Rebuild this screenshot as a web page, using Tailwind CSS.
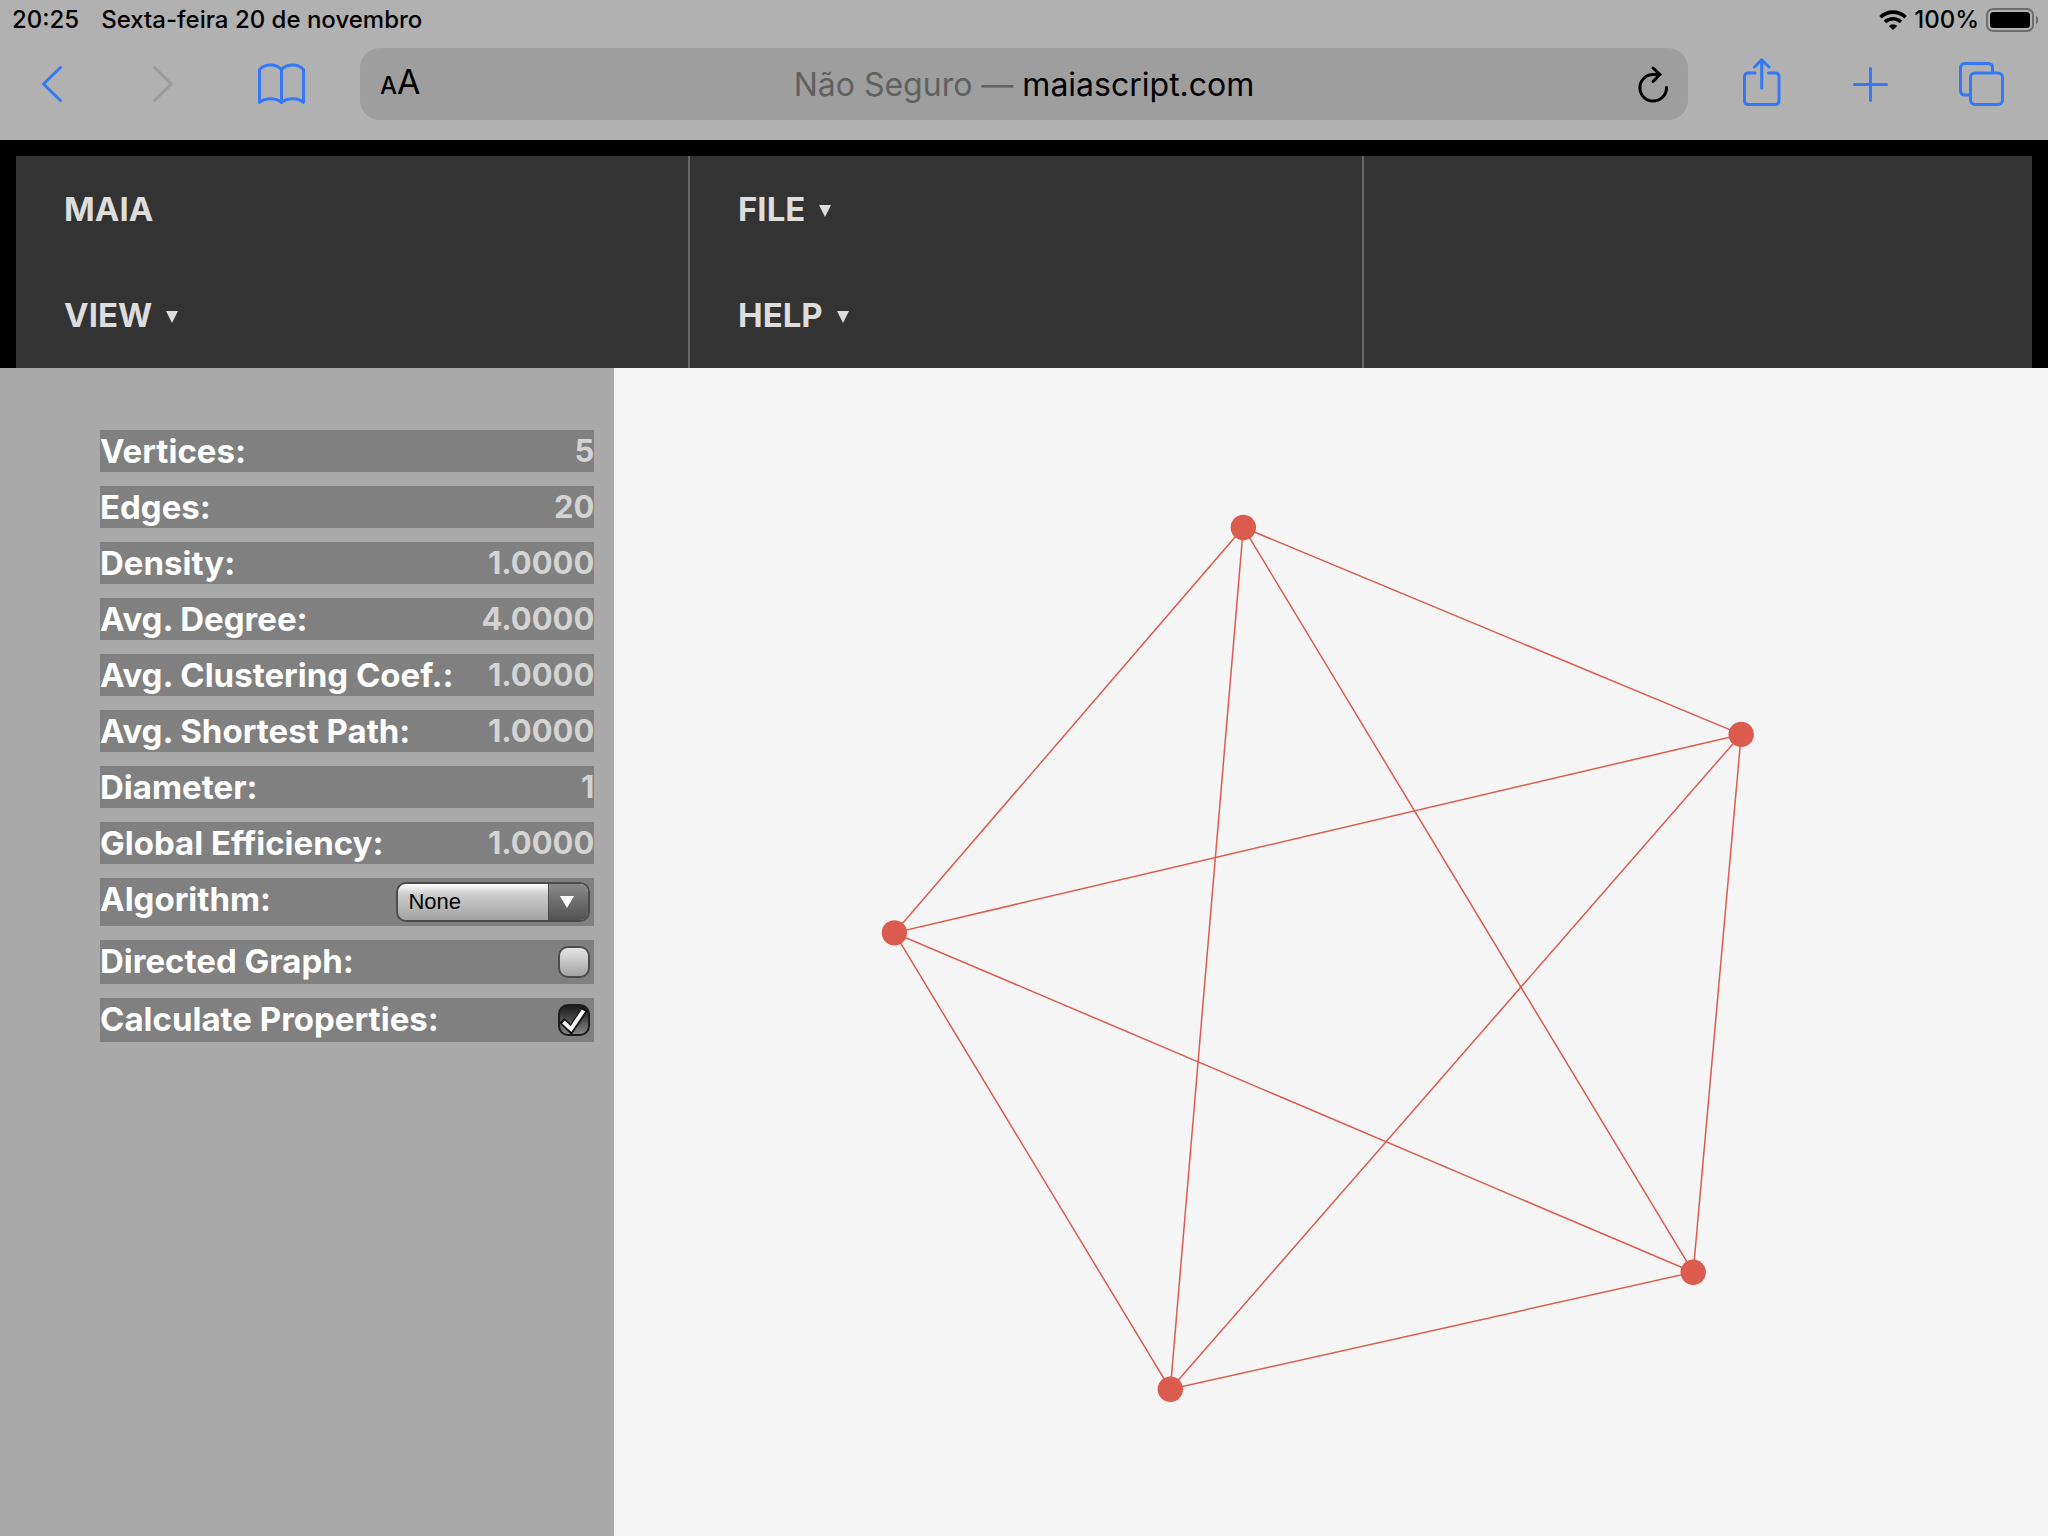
<!DOCTYPE html>
<html lang="pt-BR">
<head>
<meta charset="utf-8">
<meta name="viewport" content="width=device-width, initial-scale=1">
<title>maiascript.com</title>
<script src="https://cdn.jsdelivr.net/npm/@tailwindcss/browser@4"></script>
</head>
<body class="flex min-h-screen flex-col bg-[#f5f5f5] font-['Inter',sans-serif]">

<header class="bg-[#b1b1b1] text-black">
  <!-- Status bar -->
  <div class="flex h-10 items-center justify-between pl-3 pr-2 text-[24px] font-medium leading-10">
    <div class="flex gap-[22px]">
      <time>20:25</time>
      <span>Sexta-feira 20 de novembro</span>
    </div>
    <div class="flex items-center gap-[7px]">
      <svg class="h-5 w-7" viewBox="0 0 28 20" aria-label="Wi-Fi">
        <path d="M1.5 7.2a18 18 0 0 1 25 0" fill="none" stroke="#000" stroke-width="3.6"/>
        <path d="M6 12a11.5 11.5 0 0 1 16 0" fill="none" stroke="#000" stroke-width="3.4"/>
        <path d="M9.8 16a6 6 0 0 1 8.4 0L14 20z"/>
      </svg>
      <span>100%</span>
      <svg class="h-6 w-[54px]" viewBox="0 0 54 24" aria-label="Bateria">
        <rect x="1" y="1" width="46" height="22" rx="6" fill="none" stroke="#6c6c6c" stroke-width="2"/>
        <rect x="4" y="4" width="40" height="16" rx="3.5"/>
        <path d="M50 8c3 1 3 7 0 8z" fill="#6c6c6c"/>
      </svg>
    </div>
  </div>

  <!-- Browser toolbar -->
  <div class="flex items-center pb-5 pt-2">
    <div class="flex items-center gap-16 pl-7 pr-[52px]">
      <button class="size-12" aria-label="Voltar">
        <svg class="size-12" viewBox="28 60 48 48" fill="none" stroke="#3478f6" stroke-width="3" stroke-linecap="round" stroke-linejoin="round"><path d="M60.500 67.500 43.500 84 60.500 100.500"/></svg>
      </button>
      <button class="size-12" aria-label="Avançar" disabled>
        <svg class="size-12" viewBox="140 60 48 48" fill="none" stroke="#9c9c9c" stroke-width="3" stroke-linecap="round" stroke-linejoin="round"><path d="M154.500 67.500 171.500 84 154.500 100.500"/></svg>
      </button>
      <button class="size-14" aria-label="Favoritos">
        <svg class="size-14" viewBox="252 56 56 56" fill="none" stroke="#3478f6" stroke-width="3" stroke-linecap="round" stroke-linejoin="round"><path d="M281.500 69.500C276 63.500 265 63.500 259.500 69.500V102.500C265 97.500 276 97.500 281.500 102.500C287 97.500 298 97.500 303.500 102.500V69.500C298 63.500 287 63.500 281.500 69.500ZV102.500"/></svg>
      </button>
    </div>

    <div class="flex h-[72px] flex-1 items-center justify-between rounded-[20px] bg-[#9e9e9e] px-5 pt-[2px]">
      <button class="w-10 whitespace-nowrap text-left leading-10" aria-label="Formato da página"><span class="text-[24px] font-medium">A</span><span class="text-[34px]">A</span></button>
      <p class="text-[32px] leading-10"><span class="text-[#606060]">Não Seguro — </span>maiascript.com</p>
      <button class="h-12 w-10" aria-label="Recarregar">
        <svg class="h-12 w-10" viewBox="1628 61 40 48" fill="none" stroke="#000" stroke-width="3" stroke-linecap="round" stroke-linejoin="round"><path d="M1666.500 87.500A13.300 13.300 0 1 1 1653.500 74.500H1660"/><path d="M1653 68 1660 74.500 1653 81.500"/></svg>
      </button>
    </div>

    <div class="flex items-center gap-[52px] pl-[46px] pr-[42px]">
      <button class="size-14" aria-label="Compartilhar">
        <svg class="size-14" viewBox="1734 56 56 56" fill="none" stroke="#3478f6" stroke-width="3" stroke-linecap="round" stroke-linejoin="round"><path d="M1755 73H1748.500Q1744.500 73 1744.500 77V100.500Q1744.500 104.500 1748.500 104.500H1775Q1779 104.500 1779 100.500V77Q1779 73 1775 73H1768.500M1761.700 88V60M1754.500 67 1761.700 59.800 1769 67"/></svg>
      </button>
      <button class="size-14" aria-label="Nova aba">
        <svg class="size-14" viewBox="1842 56 56 56" fill="none" stroke="#3478f6" stroke-width="3" stroke-linecap="round"><path d="M1870.500 68.500V100.500M1854.500 84.500H1886.500"/></svg>
      </button>
      <button class="size-14" aria-label="Abas">
        <svg class="size-14" viewBox="1950 56 56 56" fill="none" stroke="#3478f6" stroke-width="3"><rect x="1970.500" y="73" width="32" height="31.500" rx="4.500"/><path d="M1970.500 95H1965Q1960.500 95 1960.500 90.500V68Q1960.500 63.500 1965 63.500H1988Q1992.500 63.500 1992.500 68V73"/></svg>
      </button>
    </div>
  </div>
</header>

<!-- Application menu -->
<nav class="bg-black px-4 pt-4 text-[33px] font-bold leading-[106px] text-[#ddd]">
  <div class="flex overflow-hidden bg-[#333]">
    <div class="box-content flex w-1/3 shrink-0 flex-col border-r-2 border-[#666]">
      <a href="#maia" class="px-12">MAIA</a>
      <a href="#view" class="flex items-center gap-[14px] px-12">VIEW
        <svg class="mt-1 h-3 w-3" viewBox="0 0 12 12" fill="#ddd"><path d="M0 0H12L6 12Z"/></svg></a>
    </div>
    <div class="box-content flex w-1/3 shrink-0 flex-col border-r-2 border-[#666]">
      <a href="#file" class="flex items-center gap-[14px] px-12">FILE
        <svg class="mt-1 h-3 w-3" viewBox="0 0 12 12" fill="#ddd"><path d="M0 0H12L6 12Z"/></svg></a>
      <a href="#help" class="flex items-center gap-[14px] px-12">HELP
        <svg class="mt-1 h-3 w-3" viewBox="0 0 12 12" fill="#ddd"><path d="M0 0H12L6 12Z"/></svg></a>
    </div>
  </div>
</nav>

<main class="flex flex-1">
  <!-- Graph properties -->
  <aside class="w-[30%] bg-[#a9a9a9] pl-[100px] pr-5 pt-[62px]">
    <dl class="flex flex-col gap-[14px] whitespace-nowrap text-[33px] font-bold leading-[42px] text-white">
      <div class="flex justify-between bg-[#808080]"><dt>Vertices:</dt><dd class="text-[31px] text-[#d3d3d3]">5</dd></div>
      <div class="flex justify-between bg-[#808080]"><dt>Edges:</dt><dd class="text-[31px] text-[#d3d3d3]">20</dd></div>
      <div class="flex justify-between bg-[#808080]"><dt>Density:</dt><dd class="text-[31px] text-[#d3d3d3]">1.0000</dd></div>
      <div class="flex justify-between bg-[#808080]"><dt>Avg. Degree:</dt><dd class="text-[31px] text-[#d3d3d3]">4.0000</dd></div>
      <div class="flex justify-between bg-[#808080]"><dt>Avg. Clustering Coef.:</dt><dd class="text-[31px] text-[#d3d3d3]">1.0000</dd></div>
      <div class="flex justify-between bg-[#808080]"><dt>Avg. Shortest Path:</dt><dd class="text-[31px] text-[#d3d3d3]">1.0000</dd></div>
      <div class="flex justify-between bg-[#808080]"><dt>Diameter:</dt><dd class="text-[31px] text-[#d3d3d3]">1</dd></div>
      <div class="flex justify-between bg-[#808080]"><dt>Global Efficiency:</dt><dd class="text-[31px] text-[#d3d3d3]">1.0000</dd></div>
      <div class="flex h-12 justify-between bg-[#808080] pr-1">
        <dt><label for="algorithm">Algorithm:</label></dt>
        <dd class="relative mt-1 h-10 w-[194px]">
          <select id="algorithm" class="block h-10 w-full appearance-none rounded-[10px] border-2 border-[#4c4c4c] bg-linear-to-b from-white via-[#cbcbcb] via-30% to-[#a3a3a3] pl-[10px] font-['Liberation_Sans',sans-serif] text-[22px] font-normal leading-9 text-black">
            <option>None</option>
          </select>
          <span class="pointer-events-none absolute inset-y-[2px] right-[2px] flex w-10 items-center justify-center rounded-r-lg border-l border-[#4c4c4c] bg-linear-to-b from-[#8a8a8a] to-[#525252] pr-1">
            <svg class="h-3 w-[14px]" viewBox="0 0 14 12" fill="#fff"><path d="M0 0H14L7 12Z"/></svg>
          </span>
        </dd>
      </div>
      <div class="flex h-11 justify-between bg-[#808080] pr-1">
        <dt><label for="directed">Directed Graph:</label></dt>
        <dd class="mt-[6px]"><input id="directed" type="checkbox" class="block size-8 appearance-none rounded-[10px] border-2 border-[#4c4c4c] bg-linear-to-b from-[#e6e6e6] to-[#a3a3a3]"></dd>
      </div>
      <div class="flex h-11 justify-between bg-[#808080] pr-1">
        <dt><label for="calculate">Calculate Properties:</label></dt>
        <dd class="relative mt-[6px]">
          <input id="calculate" type="checkbox" checked class="block size-8 appearance-none rounded-[10px] border-2 border-[#1c1c1c] bg-linear-to-b from-[#1c1c1c] to-[#858585]">
          <svg class="pointer-events-none absolute inset-0 size-8" viewBox="0 0 32 32" fill="none"><path d="M4 16.500 13 25.500 27 5" stroke="#111" stroke-width="7"/><path d="M5.500 18 13 25 25.500 6.500" stroke="#f5f5f5" stroke-width="4"/></svg>
        </dd>
      </div>
    </dl>
  </aside>

  <!-- Complete graph with five vertices -->
  <section class="flex-1 bg-[#f5f5f5]">
    <svg class="block w-full" viewBox="614 368 1434 1167" fill="none" stroke="#db5c4f" stroke-width="1.500" aria-label="Grafo">
      <path d="M1243.500 527.500 1741.500 734.500 1693.500 1272.500 1170.500 1389.500 894.500 933ZL1693.500 1272.500 894.500 933 1741.500 734.500 1170.500 1389.500Z"/>
      <g fill="#db5c4f" stroke="none">
        <circle cx="1243.500" cy="527.500" r="12.700"/>
        <circle cx="1741.500" cy="734.500" r="12.700"/>
        <circle cx="1693.500" cy="1272.500" r="12.700"/>
        <circle cx="1170.500" cy="1389.500" r="12.700"/>
        <circle cx="894.500" cy="933" r="12.700"/>
      </g>
    </svg>
  </section>
</main>
</body>
</html>
